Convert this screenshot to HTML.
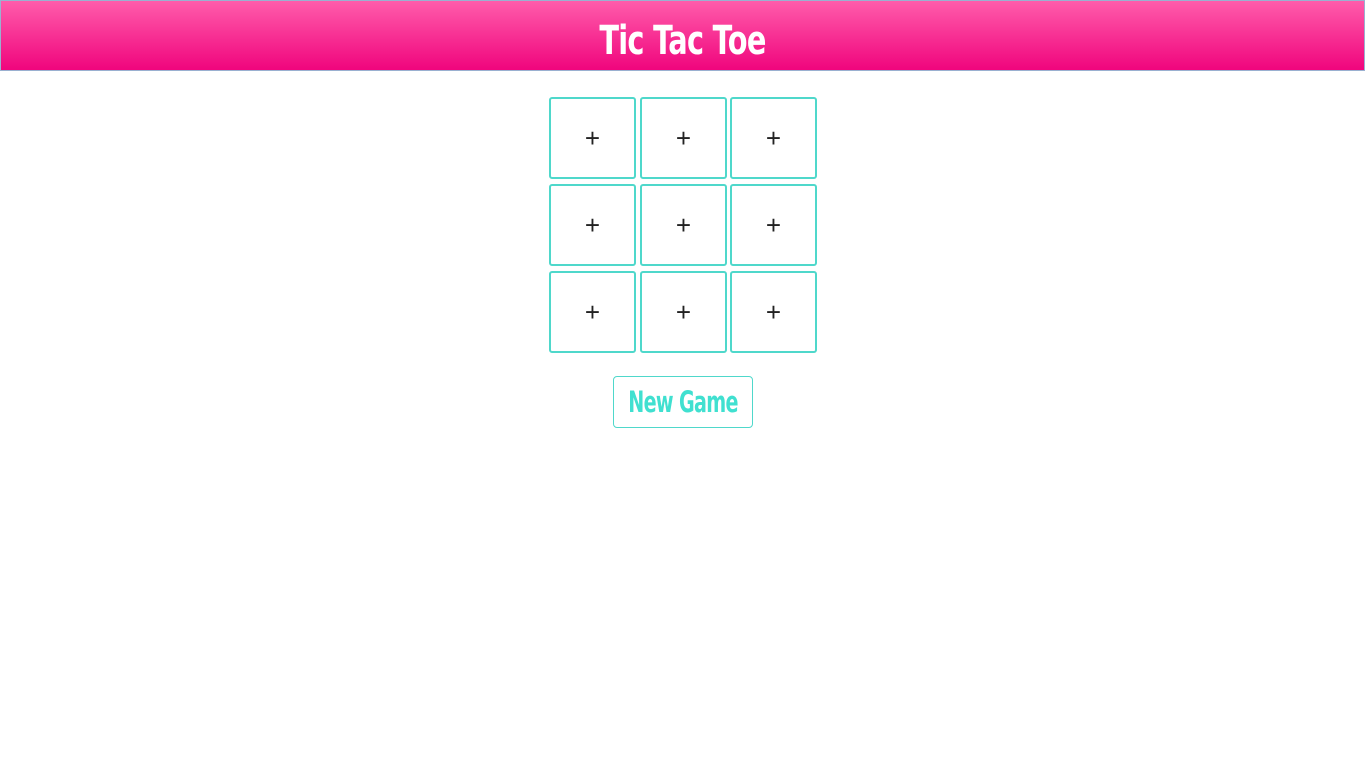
<!DOCTYPE html>
<html><head><style>
body{margin:0;background:#fff;width:1365px;height:767px;overflow:hidden;font-family:"Liberation Sans",sans-serif}
.hdr{position:absolute;left:0;top:0;width:1363px;height:69px;border:1px solid #9ab0d0;background:linear-gradient(#ff5cab,#f0057d);display:flex;justify-content:center}
.hdr h1{margin:0;line-height:80px;font-size:40px;color:#fff;font-family:"DejaVu Sans",sans-serif;font-weight:bold;white-space:nowrap;transform:scaleX(0.72);letter-spacing:-1px}
.c{position:absolute;width:83px;height:78px;border:2px solid #4fd8cb;border-radius:3px;box-sizing:content-box;text-align:center;line-height:78px;font-size:26px;color:#222}
.btn{position:absolute;left:613px;top:376px;width:138px;height:50px;border:1px solid #4fd8cb;border-radius:4px;display:flex;justify-content:center;line-height:51px;white-space:nowrap}
.btn span{flex:none;font-size:29px;color:#40e0d0;font-family:"DejaVu Sans",sans-serif;font-weight:bold;transform:scaleX(0.66);letter-spacing:-1px}
</style></head><body>
<div class="hdr"><h1>Tic Tac Toe</h1></div>
<div class="c" style="left:549px;top:97px">+</div>
<div class="c" style="left:640px;top:97px">+</div>
<div class="c" style="left:730px;top:97px">+</div>
<div class="c" style="left:549px;top:184px">+</div>
<div class="c" style="left:640px;top:184px">+</div>
<div class="c" style="left:730px;top:184px">+</div>
<div class="c" style="left:549px;top:271px">+</div>
<div class="c" style="left:640px;top:271px">+</div>
<div class="c" style="left:730px;top:271px">+</div>
<div class="btn"><span>New Game</span></div>
</body></html>
